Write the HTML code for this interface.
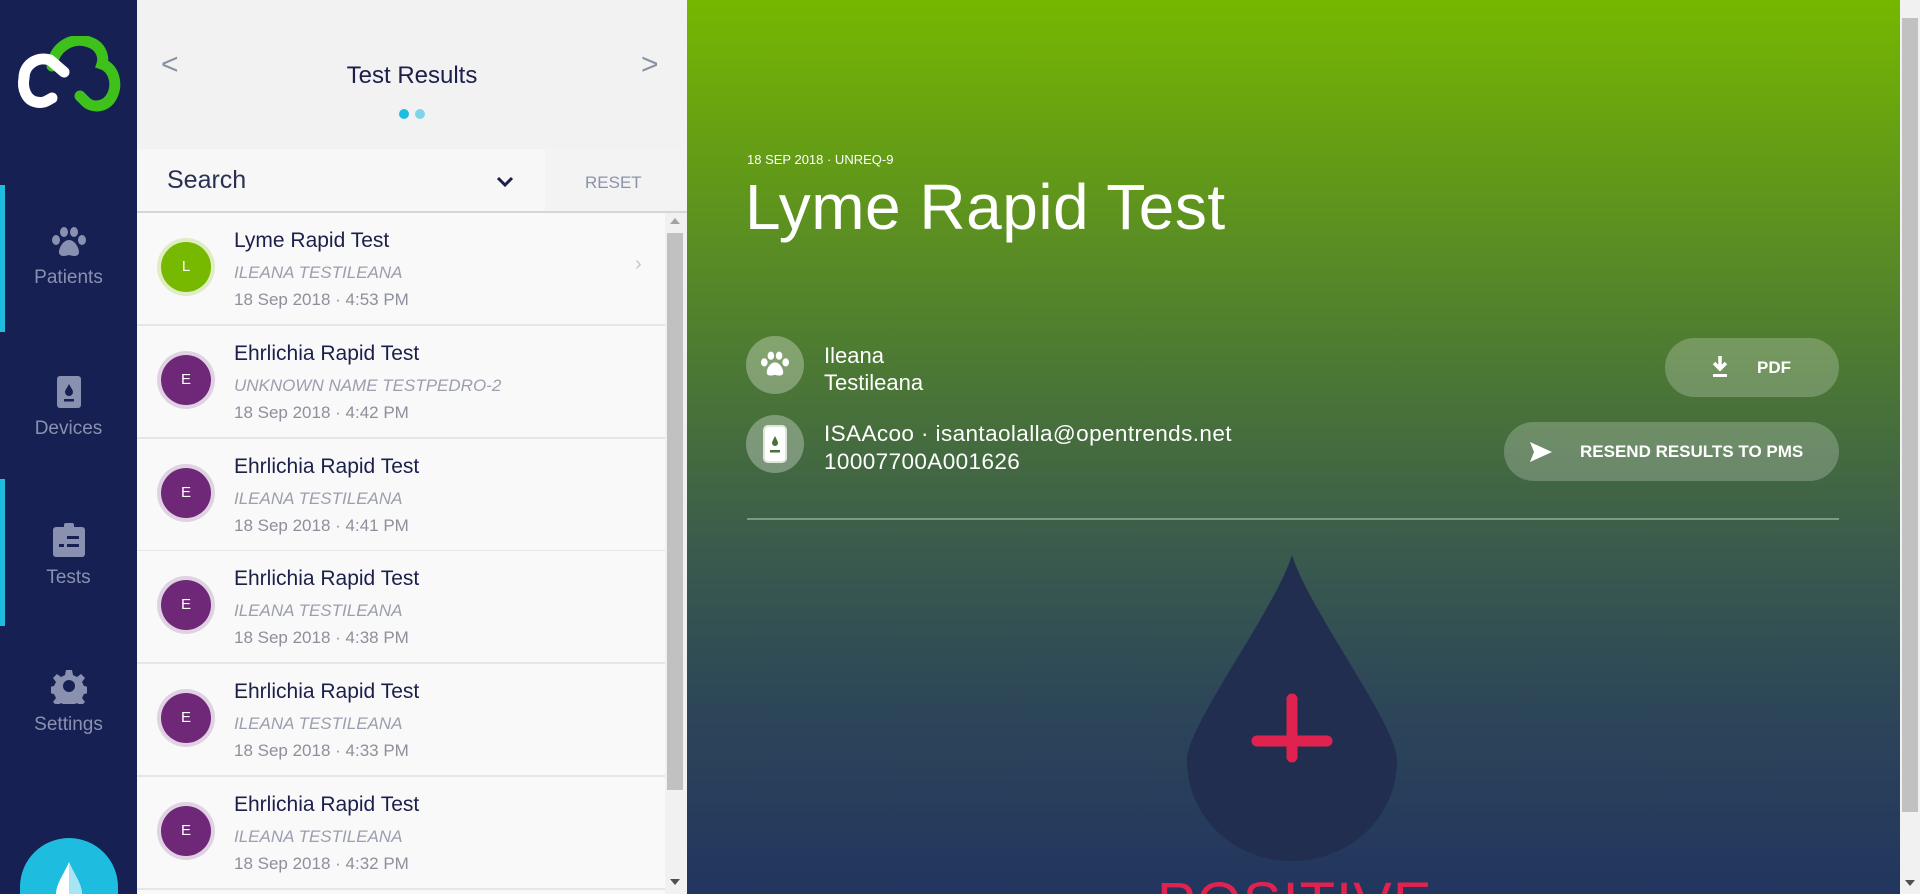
<!DOCTYPE html>
<html style="width:1920px;height:894px;overflow:hidden"><head><meta charset="utf-8"><style>
*{margin:0;padding:0;box-sizing:border-box}
body{width:1920px;height:894px;overflow:hidden;position:relative;font-family:"Liberation Sans",sans-serif;background:#fff}
.abs{position:absolute}
#side{left:0;top:0;width:137px;height:894px;background:#162052;overflow:hidden}
.nav{position:absolute;left:0;width:137px;height:147px;text-align:center;color:#8a91b0;font-size:19px}
.nav.act::before{content:"";position:absolute;left:0;top:0;width:5px;height:100%;background:#1ebde0}
.nav svg{display:block;margin:0 auto 10px}
#list{left:137px;top:0;width:550px;height:894px;background:#f9f9f9;overflow:hidden}
.item{position:absolute;left:0;width:528px;height:113px;border-bottom:2px solid #e4e6ee;background:#f9f9f9}
.av{position:absolute;left:24px;top:29px;width:50px;height:50px;border-radius:50%;color:#fff;font-size:15px;text-align:center;line-height:50px}
.t1{position:absolute;left:97px;top:16px;font-size:21px;color:#1b1f4a;font-weight:500}
.t2{position:absolute;left:97px;top:50px;font-size:17px;color:#9b9fae;font-style:italic}
.t3{position:absolute;left:97px;top:77px;font-size:17px;color:#8d909c}
#main{left:687px;top:0;width:1213px;height:894px;background:linear-gradient(180deg,#76b700 0%,#4d7a33 40%,#3a5a4d 62%,#2d4758 78%,#22355f 100%);overflow:hidden;color:#fff}
.btn{position:absolute;background:rgba(255,255,255,0.22);border-radius:30px;color:#fff;font-size:17px;font-weight:bold}
</style></head><body>
<div id="side" class="abs">
  <svg class="abs" style="left:14px;top:36px" width="110" height="76" viewBox="0 0 110 76">
    <path d="M38 30 C40 10 60 0 75 6 C88 10 90 22 88 28 C100 32 104 48 98 60 C92 72 78 72 72 66 L66 60" fill="none" stroke="#3fc11b" stroke-width="11" stroke-linecap="round"/>
    <path d="M50 36 L36 24 C24 20 10 28 10 42 C8 52 12 64 22 66 C30 68 34 64 38 62" fill="none" stroke="#fff" stroke-width="11" stroke-linecap="round"/>
  </svg>
  <div class="nav act" style="top:185px"><svg style="margin-top:42px" width="34" height="30" viewBox="0 0 34 30" fill="#8a91b0"><ellipse cx="12" cy="5" rx="4" ry="5"/><ellipse cx="22" cy="5" rx="4" ry="5"/><ellipse cx="4" cy="13" rx="4" ry="5"/><ellipse cx="30" cy="13" rx="4" ry="5"/><path d="M17 13c-6 0-10 8-10 12 0 4 4 5 10 3 6 2 10 1 10-3 0-4-4-12-10-12z"/></svg>Patients</div>
  <div class="nav" style="top:332px"><svg style="margin-top:44px" width="24" height="32" viewBox="0 0 24 32"><rect width="24" height="32" rx="3" fill="#8a91b0"/><path d="M12 8c-2 4-4 6-4 8a4 4 0 008 0c0-2-2-4-4-8z" fill="#162052"/><rect x="7" y="23" width="10" height="2.5" fill="#162052"/></svg>Devices</div>
  <div class="nav act" style="top:479px"><svg style="margin-top:44px" width="32" height="34" viewBox="0 0 32 34"><rect y="4" width="32" height="30" rx="3" fill="#8a91b0"/><rect x="11" y="0" width="10" height="7" rx="2" fill="#8a91b0"/><rect x="14" y="13" width="12" height="3" fill="#162052"/><rect x="14" y="21" width="12" height="3" fill="#162052"/><rect x="6" y="21" width="5" height="3" fill="#162052"/></svg>Tests</div>
  <div class="nav" style="top:626px"><svg style="margin-top:42px" width="36" height="36" viewBox="0 0 36 36"><path fill="#8a91b0" d="M15 2h6l1 5 4 2 4-3 4 4-3 4 2 4 5 1v6l-5 1-2 4 3 4-4 4-4-3-4 2-1 5h-6l-1-5-4-2-4 3-4-4 3-4-2-4-5-1v-6l5-1 2-4-3-4 4-4 4 3 4-2z"/><circle cx="18" cy="18" r="6" fill="#162052"/></svg>Settings</div>
  <div class="abs" style="left:20px;top:838px;width:98px;height:56px;border-radius:49px 49px 0 0;background:#1ebde0"></div>
  <svg class="abs" style="left:52px;top:862px" width="34" height="32" viewBox="0 0 34 32"><path d="M17 0C12 12 4 22 4 32h26C30 22 22 12 17 0z" fill="#fff"/><path d="M17 0C22 12 30 22 30 32H17z" fill="#a8e4f2"/></svg>
</div>
<div id="list" class="abs">
  <div class="abs" style="left:0;top:0;width:550px;height:149px;background:#f2f2f2"></div>
  <div class="abs" style="left:24px;top:48px;font-size:30px;color:#8a91a6">&lt;</div>
  <div class="abs" style="left:504px;top:48px;font-size:30px;color:#8a91a6">&gt;</div>
  <div class="abs" style="left:0;top:62px;width:550px;text-align:center;font-size:24px;color:#1b1f4a">Test Results</div>
  <div class="abs" style="left:262px;top:109px;width:10px;height:10px;border-radius:50%;background:#1ebde0"></div>
  <div class="abs" style="left:278px;top:109px;width:10px;height:10px;border-radius:50%;background:#7fd4ea"></div>
  <div class="abs" style="left:0;top:149px;width:408px;height:63px;background:#f7f7f7"></div>
  <div class="abs" style="left:408px;top:149px;width:142px;height:63px;background:#f3f3f4"></div>
  <div class="abs" style="left:30px;top:166px;font-size:25px;color:#2a3050">Search</div>
  <svg class="abs" style="left:358px;top:175px" width="20" height="14" viewBox="0 0 20 14"><path d="M3 3l7 7 7-7" fill="none" stroke="#1b1f4a" stroke-width="3"/></svg>
  <div class="abs" style="left:448px;top:173px;font-size:17px;color:#8a93a8">RESET</div>
  <div class="abs" style="left:0;top:211px;width:550px;height:2px;background:#d6d6d6"></div>
  <div class="item" style="top:213px"><div class="av" style="background:#76b900;box-shadow:0 0 0 4px #dfecc4">L</div><div class="t1">Lyme Rapid Test</div><div class="t2">ILEANA TESTILEANA</div><div class="t3">18 Sep 2018 · 4:53 PM</div><div class="abs" style="left:498px;top:40px;color:#c4c6cc;font-size:20px">›</div></div>
  <div class="item" style="top:326px"><div class="av" style="background:#6e2877;box-shadow:0 0 0 4px #e0d2e3">E</div><div class="t1">Ehrlichia Rapid Test</div><div class="t2">UNKNOWN NAME TESTPEDRO-2</div><div class="t3">18 Sep 2018 · 4:42 PM</div></div>
  <div class="item" style="top:439px"><div class="av" style="background:#6e2877;box-shadow:0 0 0 4px #e0d2e3">E</div><div class="t1">Ehrlichia Rapid Test</div><div class="t2">ILEANA TESTILEANA</div><div class="t3">18 Sep 2018 · 4:41 PM</div></div>
  <div class="item" style="top:551px"><div class="av" style="background:#6e2877;box-shadow:0 0 0 4px #e0d2e3">E</div><div class="t1">Ehrlichia Rapid Test</div><div class="t2">ILEANA TESTILEANA</div><div class="t3">18 Sep 2018 · 4:38 PM</div></div>
  <div class="item" style="top:664px"><div class="av" style="background:#6e2877;box-shadow:0 0 0 4px #e0d2e3">E</div><div class="t1">Ehrlichia Rapid Test</div><div class="t2">ILEANA TESTILEANA</div><div class="t3">18 Sep 2018 · 4:33 PM</div></div>
  <div class="item" style="top:777px;height:117px;border-bottom:none"><div class="av" style="background:#6e2877;box-shadow:0 0 0 4px #e0d2e3">E</div><div class="t1">Ehrlichia Rapid Test</div><div class="t2">ILEANA TESTILEANA</div><div class="t3">18 Sep 2018 · 4:32 PM</div></div>
  <div class="abs" style="left:0;top:888px;width:528px;height:2px;background:#e4e6ee"></div>
  <div class="abs" style="left:528px;top:213px;width:22px;height:681px;background:#f1f1f1"></div>
  <div class="abs" style="left:530px;top:233px;width:16px;height:557px;background:#c1c1c1"></div>
  <div class="abs" style="left:533px;top:218px;width:0;height:0;border-left:5px solid transparent;border-right:5px solid transparent;border-bottom:6px solid #a3a3a3"></div>
  <div class="abs" style="left:533px;top:879px;width:0;height:0;border-left:5px solid transparent;border-right:5px solid transparent;border-top:6px solid #505050"></div>
</div>
<div id="main" class="abs">
  <div class="abs" style="left:60px;top:152px;font-size:13px">18 SEP 2018 · UNREQ-9</div>
  <div class="abs" style="left:58px;top:170px;font-size:64px;font-weight:300;letter-spacing:0.5px">Lyme Rapid Test</div>
  <div class="abs" style="left:59px;top:336px;width:58px;height:58px;border-radius:50%;background:rgba(255,255,255,0.3)"></div>
  <svg class="abs" style="left:74px;top:350px" width="28" height="28" viewBox="0 0 34 30" fill="#fff"><ellipse cx="12" cy="5" rx="4" ry="5"/><ellipse cx="22" cy="5" rx="4" ry="5"/><ellipse cx="4" cy="13" rx="4" ry="5"/><ellipse cx="30" cy="13" rx="4" ry="5"/><path d="M17 13c-6 0-10 8-10 12 0 4 4 5 10 3 6 2 10 1 10-3 0-4-4-12-10-12z"/></svg>
  <div class="abs" style="left:137px;top:342px;font-size:22px;line-height:27px">Ileana<br>Testileana</div>
  <div class="abs" style="left:59px;top:415px;width:58px;height:58px;border-radius:50%;background:rgba(255,255,255,0.3)"></div>
  <svg class="abs" style="left:76px;top:425px" width="24" height="38" viewBox="0 0 24 38"><rect x="1" y="1" width="22" height="36" rx="4" fill="#fff" stroke="#dfe8d8" stroke-width="2"/><path d="M12 11c-2 4-3 6-3 7a3 3 0 006 0c0-1-1-3-3-7z" fill="#4b7038"/><rect x="7" y="25" width="10" height="2.5" fill="#4b7038"/></svg>
  <div class="abs" style="left:137px;top:420px;font-size:22.5px;line-height:28px;letter-spacing:0.4px">ISAAcoo · isantaolalla@opentrends.net<br>10007700A001626</div>
  <div class="btn" style="left:978px;top:338px;width:174px;height:59px"><svg class="abs" style="left:46px;top:18px" width="18" height="22" viewBox="0 0 18 22"><path d="M9 0v12M3 7l6 6 6-6" stroke="#fff" stroke-width="3.5" fill="none"/><rect x="2" y="18" width="14" height="3" fill="#fff"/></svg><span class="abs" style="left:92px;top:20px">PDF</span></div>
  <div class="btn" style="left:817px;top:422px;width:335px;height:59px"><svg class="abs" style="left:26px;top:20px" width="22" height="20" viewBox="0 0 22 20"><path d="M0 0L22 10 0 20 4 10z" fill="#fff"/></svg><span class="abs" style="left:76px;top:20px">RESEND RESULTS TO PMS</span></div>
  <div class="abs" style="left:60px;top:518px;width:1092px;height:2px;background:rgba(255,255,255,0.35)"></div>
  <svg class="abs" style="left:500px;top:555px" width="210" height="306" viewBox="0 0 210 306"><path d="M105 0C88 55 0 170 0 205 0 262 47 306 105 306 163 306 210 262 210 205 210 170 122 55 105 0z" fill="#212e4f"/><path d="M105 144v58M70 186h70" stroke="#e0234e" stroke-width="11" stroke-linecap="round"/></svg>
  <div class="abs" style="left:470px;top:874px;height:20px;overflow:hidden;font-size:58px;line-height:60px;color:#e0234e;letter-spacing:1px">POSITIVE</div>
</div>
<div class="abs" style="left:1900px;top:0;width:20px;height:894px;background:#f1f1f1"></div>
<div class="abs" style="left:1902px;top:18px;width:16px;height:794px;background:#c1c1c1"></div>
<div class="abs" style="left:1905px;top:880px;width:0;height:0;border-left:5px solid transparent;border-right:5px solid transparent;border-top:6px solid #505050"></div>
</body></html>
